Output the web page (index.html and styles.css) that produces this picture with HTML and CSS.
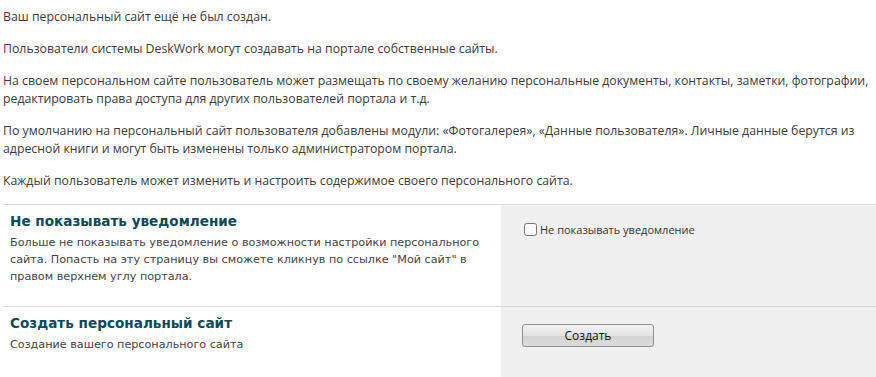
FILE: index.html
```html
<!DOCTYPE html>
<html lang="ru">
<head>
  <meta charset="UTF-8">
  <title>Мой сайт</title>
  <link rel="stylesheet" href="styles.css">
</head>
<body>
  <!-- Уведомление о персональном сайте -->
  <div class="intro">
    <p>Ваш персональный сайт ещё не был создан.</p>
    <p>Пользователи системы DeskWork могут создавать на портале собственные сайты.</p>
    <p>На своем персональном сайте пользователь может размещать по своему желанию персональные документы, контакты, заметки, фотографии, редактировать права доступа для других пользователей портала и т.д.</p>
    <p>По умолчанию на персональный сайт пользователя добавлены модули: «Фотогалерея», «Данные пользователя». Личные данные берутся из адресной книги и могут быть изменены только администратором портала.</p>
    <p>Каждый пользователь может изменить и настроить содержимое своего персонального сайта.</p>
  </div>

  <!-- Секции формы -->
  <div class="form">
    <div class="section">
      <div class="section-info">
        <h3>Не показывать уведомление</h3>
        <div class="section-desc">Больше не показывать уведомление о возможности настройки персонального сайта. Попасть на эту страницу вы сможете кликнув по ссылке "Мой сайт" в правом верхнем углу портала.</div>
      </div>
      <div class="section-control">
        <label class="check">
          <input type="checkbox">
          <span>Не показывать уведомление</span>
        </label>
      </div>
    </div>
    <div class="section section-last">
      <div class="section-info">
        <h3>Создать персональный сайт</h3>
        <div class="section-desc">Создание вашего персонального сайта</div>
      </div>
      <div class="section-control">
        <button class="btn">Создать</button>
      </div>
    </div>
  </div>
</body>
</html>
```
FILE: styles.css
```css
body {
  margin: 0;
  padding: 8px 0 0 3px;
  font-family: "Open Sans", sans-serif;
  font-size: 12.3px;
  color: #3b3b3b;
  background-color: #fff;
}
.intro p {
  margin: 0 0 14px;
  line-height: 18px;
}
.section {
  display: flex;
  min-height: 101px;
  border-top: 1px solid #d8d8d8;
}
.section-last {
  min-height: 70px;
}
.section-info {
  width: 488px;
  padding: 8px 3px 0 7px;
}
.section h3 {
  margin: 0 0 5px;
  font-family: "DejaVu Sans", Verdana, sans-serif;
  font-size: 13.6px;
  font-weight: bold;
  color: #0c4a57;
}
.section-desc {
  font-family: "DejaVu Sans", Verdana, sans-serif;
  font-size: 11.2px;
  line-height: 17px;
  color: #444;
}
.section-control {
  flex: 1;
  background-color: #f0f0f0;
  padding: 17px 0 0 21px;
}
.check {
  display: flex;
  align-items: center;
  gap: 3px;
  margin-left: 2px;
  font-size: 11px;
  color: #333;
}
.check input {
  margin: 0;
  width: 13px;
  height: 13px;
}
.btn {
  width: 132px;
  height: 23px;
  font-family: "Open Sans", sans-serif;
  font-size: 12px;
  color: #111;
  border: 1px solid #8e8e8e;
  border-radius: 3px;
  background: linear-gradient(#f3f3f3, #e2e2e2 50%, #d4d4d4 51%, #dcdcdc);
}
```
